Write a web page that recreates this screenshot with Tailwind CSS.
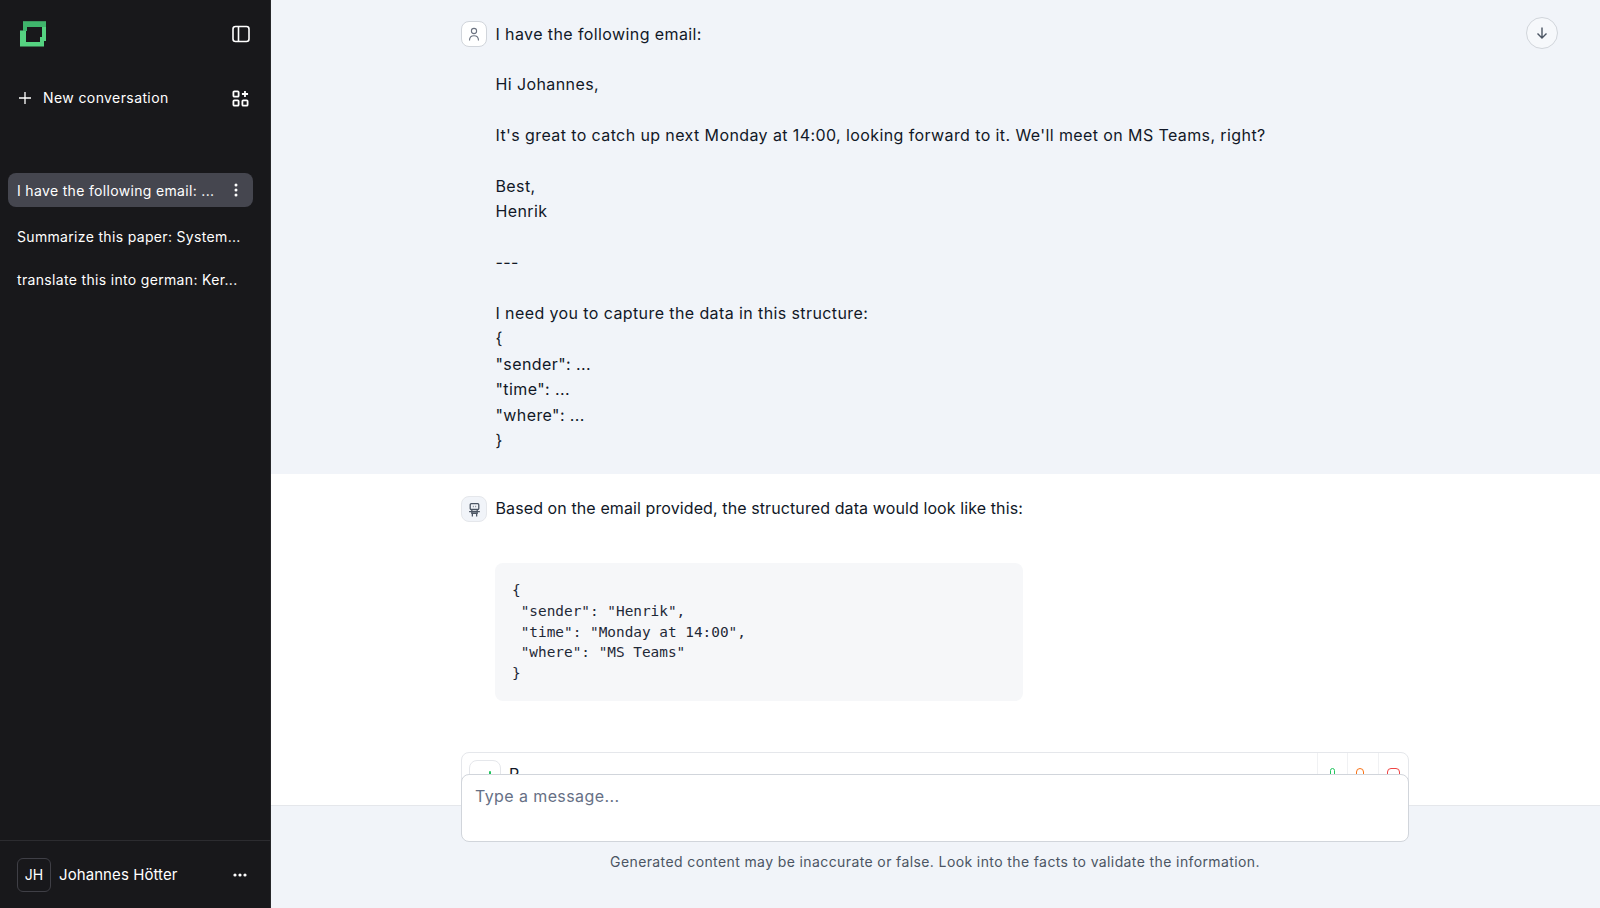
<!DOCTYPE html>
<html lang="en">
<head>
    <meta charset="UTF-8">
    <meta name="viewport" content="width=device-width, initial-scale=1.0">
    <script src="https://cdn.jsdelivr.net/npm/@tailwindcss/browser@4"></script>
    <title>chat</title>
</head>
<body class="h-[908px] overflow-hidden bg-white font-['Inter',sans-serif]">
<div class="flex h-[908px]">
    <!-- Sidebar -->
    <aside class="flex w-[271px] shrink-0 flex-col bg-[#18181b] text-white border-r border-[#27272a]">
        <div class="flex h-[68px] items-center justify-between pl-5 pr-[20px]">
            <svg width="26" height="26" viewBox="0 0 26 26" fill="none"><path fill-rule="evenodd" d="M3 .5h23V20h-2v5.500H0V9.500h3zM7 6v4H6v11h14v-5h2V6z" fill="#55d381"/><path d="M3 .5h23V6H7v4H3z" fill="#3fb56c"/></svg>
            <svg width="18" height="18" viewBox="0 0 18 18" fill="none" stroke="white" stroke-width="1.6"><rect x="1" y="1.500" width="16" height="15" rx="2.500"/><path d="M6.500 1.500v15"/></svg>
        </div>
        <div class="mt-[10px] flex h-[40px] items-center justify-between pl-[18px] pr-[21px]">
            <div class="flex items-center gap-[11px] text-sm tracking-[0.4px] text-white">
                <svg width="14" height="14" viewBox="0 0 14 14" fill="none" stroke="white" stroke-width="1.3"><path d="M7 1v12M1 7h12"/></svg>
                <span>New conversation</span>
            </div>
            <svg width="17" height="17" viewBox="0 0 18 18" fill="none" stroke="white" stroke-width="1.9"><rect x="1.500" y="1.500" width="5.500" height="5.500" rx="1"/><rect x="1.500" y="11" width="5.500" height="5.500" rx="1"/><rect x="11" y="11" width="5.500" height="5.500" rx="1"/><path d="M13.750 1v6.500M10.500 4.250H17"/></svg>
        </div>
        <div class="mt-[55px] flex flex-1 flex-col px-2 text-sm text-white">
            <div class="flex h-[34px] w-[245px] items-center justify-between rounded-lg bg-[#45464f] pl-[9px] pr-[15px]">
                <span class="pt-px tracking-[0.33px]">I have the following email: ...</span>
                <svg width="4" height="14" viewBox="0 0 4 14" fill="white"><circle cx="2" cy="2" r="1.500"/><circle cx="2" cy="7" r="1.500"/><circle cx="2" cy="12" r="1.500"/></svg>
            </div>
            <div class="mt-[20px] pl-[9px] leading-[20px] tracking-[0.33px]">Summarize this paper: System...</div>
            <div class="mt-[23px] pl-[9px] leading-[20px] tracking-[0.33px]">translate this into german: Ker...</div>
        </div>
        <div class="flex h-[68px] items-center justify-between border-t border-[#2c2c30] pl-[17px] pr-[23px]">
            <div class="flex items-center gap-[8px]">
                <div class="flex size-[34px] items-center justify-center rounded-md border border-[#3f3f46] pt-px text-sm">JH</div>
                <span class="pt-[2px] text-[15px] tracking-[0.08px]">Johannes Hötter</span>
            </div>
            <svg width="14" height="4" viewBox="0 0 14 4" fill="white"><circle cx="2" cy="2" r="1.600"/><circle cx="7" cy="2" r="1.600"/><circle cx="12" cy="2" r="1.600"/></svg>
        </div>
    </aside>

    <!-- Main Content -->
    <main class="relative flex min-w-0 flex-1 flex-col">
        <div class="h-[805px] overflow-hidden">
            <!-- User message -->
            <section class="h-[474px] bg-[#f1f4f9] pl-[190px] pt-[21.500px]">
                <div class="flex gap-[8.500px] text-base leading-[25.400px] tracking-[0.4px] text-[#111827]">
                    <div class="-mt-[0.500px] flex size-[26px] shrink-0 items-center justify-center rounded-lg border border-[#d1d5db] bg-white">
                        <svg width="14" height="14" viewBox="0 0 14 14" fill="none" stroke="#6b7280" stroke-width="1.100"><circle cx="7" cy="4" r="2.600"/><path d="M2.500 13.500c0-3 1.800-4.800 4.500-4.800s4.500 1.800 4.500 4.800"/></svg>
                    </div>
                    <div>
                        <p>I have the following email:</p>
                        <p class="mt-[25.400px]">Hi Johannes,</p>
                        <p class="mt-[25.400px]">It's great to catch up next Monday at 14:00, looking forward to it. We'll meet on MS Teams, right?</p>
                        <p class="mt-[25.400px]">Best,</p>
                        <p>Henrik</p>
                        <p class="mt-[25.400px]">---</p>
                        <p class="mt-[25.400px]">I need you to capture the data in this structure:</p>
                        <p>{</p>
                        <p>"sender": ...</p>
                        <p>"time": ...</p>
                        <p>"where": ...</p>
                        <p>}</p>
                    </div>
                </div>
            </section>
            <!-- Assistant message -->
            <section class="bg-white pl-[190px] pt-[22px]">
                <div class="flex gap-[8.500px] text-base leading-[25.400px] tracking-[0.1px] text-[#111827]">
                    <div class="flex size-[26px] shrink-0 items-center justify-center rounded-lg border border-[#e5e7eb] bg-[#f1f4f9]">
                        <svg width="15" height="15" viewBox="0 0 14 14" fill="none" stroke="#4b5563" stroke-width="1.200"><rect x="3" y="1.500" width="8" height="5.500" rx="1"/><path d="M5.500 4.200h.6M7.900 4.200h.6M2 9h10M4.500 7v3.500h5V7M5 10.500V13.500M9 10.500V13.500"/></svg>
                    </div>
                    <div class="w-[527px]">
                        <p class="whitespace-nowrap">Based on the email provided, the structured data would look like this:</p>
                        <pre class="-ml-[0.500px] mt-[42px] h-[138px] rounded-lg bg-[#f6f7f9] px-[17px] pt-[17px] font-['DejaVu_Sans_Mono',monospace] text-[14.400px] leading-[20.600px] tracking-normal text-[#1f2937]">{
 "sender": "Henrik",
 "time": "Monday at 14:00",
 "where": "MS Teams"
}</pre>
                    </div>
                </div>
                <!-- Feedback card, mostly hidden by the input -->
                <div class="mt-[51px] flex h-[60px] w-[948px] justify-between rounded-t-lg border border-[#e5e7eb] bg-white">
                    <div class="flex pl-[7px] pt-[7px]">
                        <div class="flex size-[32px] justify-center rounded-lg border border-[#e5e7eb] pl-[9px] pt-[10px]">
                            <span class="h-[4px] w-[2px] rounded-full bg-[#22c55e]"></span>
                        </div>
                        <span class="ml-[8px] mt-[2px] text-base leading-[25px] text-[#111827]">R</span>
                    </div>
                    <div class="flex">
                        <div class="flex w-[30px] justify-center border-l border-[#f0f1f3] pt-[15px]"><span class="h-[14px] w-[5px] rounded-t-full border-[1.500px] border-[#22c55e]"></span></div>
                        <div class="flex w-[31px] justify-center border-l border-[#f0f1f3] pr-[6px] pt-[15px]"><span class="h-[14px] w-[8px] rounded-t-md border-[1.500px] border-[#f97316]"></span></div>
                        <div class="flex w-[30px] justify-center border-l border-[#f0f1f3] pt-[15px]"><span class="h-[14px] w-[13px] rounded-t-sm border-[1.500px] border-[#ef4444]"></span></div>
                    </div>
                </div>
            </section>
        </div>

        <!-- Input footer -->
        <footer class="relative flex-1 border-t border-[#e5e7eb] bg-[#f1f4f9] pl-[190px]">
            <div class="-mt-[32px] h-[68px] w-[948px] rounded-lg border border-[#d1d5db] bg-white px-[13px] pt-[9px] text-base leading-6 tracking-[0.4px] text-[#667085]">Type a message...</div>
            <p class="mt-[10px] w-[948px] text-center text-sm leading-5 tracking-[0.39px] text-[#4b5563]">Generated content may be inaccurate or false. Look into the facts to validate the information.</p>
        </footer>

        <!-- Scroll to bottom -->
        <button class="absolute right-[42px] top-[17px] flex size-8 items-center justify-center rounded-full border border-[#d1d5db] bg-white/40">
            <svg width="14" height="14" viewBox="0 0 14 14" fill="none" stroke="#4b5563" stroke-width="1.400"><path d="M7 1.500v10.500M2.500 7.500 7 12l4.500-4.500"/></svg>
        </button>
    </main>
</div>
</body>
</html>
